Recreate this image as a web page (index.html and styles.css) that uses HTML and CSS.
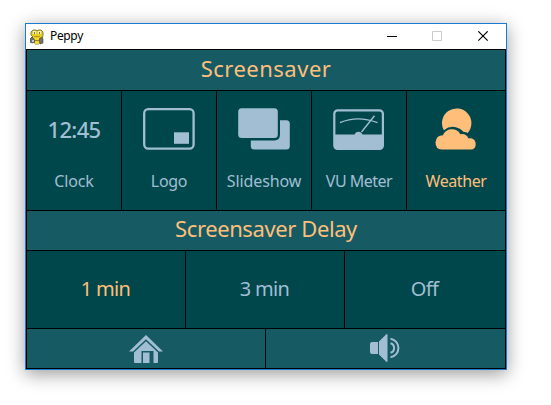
FILE: index.html
```html
<!DOCTYPE html>
<html lang="en">
<head>
<meta charset="utf-8">
<title>Peppy</title>
<link rel="stylesheet" href="styles.css">
</head>
<body>
<div class="window">
  <header class="titlebar">
    <svg class="app-icon" width="14" height="16" viewBox="0 0 14 16">
      <path d="M3 1h3l1 1 1-1h3l2 2v4l-2 3-2 1v4H5v-2H1V9l2-1-2-2V3z" fill="#e8cf22" stroke="#6d642c" stroke-width=".8"/>
      <path d="M0 10l2-2 2 2 1 3-3 1-2-1zM9 10l3-2 1 2v4l-3 1z" fill="#77726b" stroke="#403c35" stroke-width=".6"/>
      <path d="M2 11h2v2H2z" fill="#c9c9c6"/>
      <path d="M3 2h3v3H3zM8 2h3v3H8z" fill="#f2efcd"/>
      <path d="M4 3h1v2H4zM9 3h1v2H9z" fill="#77734a"/>
      <path d="M4 7.500h6" stroke="#b89a10"/>
      <path d="M5 9h4v6H5z" fill="#f0dc20"/>
      <path d="M5 11.500h4" stroke="#9a8420"/>
    </svg>
    <span class="title">Peppy</span>
    <svg class="controls" width="102" height="11" viewBox="0 0 102 11" fill="none">
      <path d="M0 5.500h10" stroke="#000"/>
      <path d="M45.500 .500h9v9h-9z" stroke="#ccc"/>
      <path d="M91.300 .300l9.400 9.400M100.700 .300l-9.400 9.400" stroke="#000" stroke-width="1.100"/>
    </svg>
  </header>
  <main class="screen">
    <h1 class="heading"><span class="t-saver">Screensaver</span></h1>
    <section class="row savers">
      <div class="tile"><div class="icon"><span class="time">12:45</span></div><span class="label l-clock">Clock</span></div>
      <div class="tile"><div class="icon">
        <svg width="52" height="42" viewBox="0 0 52 42"><rect x="1.200" y="1.200" width="49.400" height="39.400" rx="4" fill="none" stroke="currentColor" stroke-width="2.300"/><path d="M31 24.300h15v11.500H31z" fill="currentColor"/></svg>
      </div><span class="label l-logo">Logo</span></div>
      <div class="tile"><div class="icon">
        <svg width="52" height="42" viewBox="0 0 52 42" fill="currentColor"><rect x=".200" y=".300" width="39.600" height="29.700" rx="3.500"/><path d="M42 12.200h6.300q3.500 0 3.500 3.500v22.200q0 3.500-3.500 3.500H16.300q-3.500 0-3.500-3.500v-5.400h23.500q5.700 0 5.700-5.700z"/></svg>
      </div><span class="label l-slide">Slideshow</span></div>
      <div class="tile"><div class="icon">
        <svg width="52" height="42" viewBox="0 0 52 42"><rect x="1.300" y="2.300" width="48.600" height="38.600" rx="3.500" fill="none" stroke="currentColor" stroke-width="2.200"/><path d="M1 26.600h20.500a4.200 4.200 0 0 1 8 0H50V38q0 3.500-3.500 3.500h-42Q1 41.500 1 38z" fill="currentColor"/><path d="M7 14.600q17.500-7.500 37.500 0M28.500 24L41.500 7.800" fill="none" stroke="currentColor" stroke-width="1.400"/></svg>
      </div><span class="label l-vu">VU Meter</span></div>
      <div class="tile active"><div class="icon">
        <svg class="weather" width="42" height="42" viewBox="0 0 42 42" fill="currentColor"><path d="M8.800 22.200A14.700 14.700 0 1 1 32.600 25Q31.300 23.700 28.800 24Q26 21.200 24.300 20.600Q16.300 16.300 8.800 22.200z"/><path d="M6.700 41.500Q.500 41.200.500 34.500Q1 27.300 8 27.200C11 19.500 22.500 19.500 25.300 26.300C29 25.500 32.500 27.500 33.300 30.300C38 29.500 41 32.300 40.700 36.500Q40.300 41.500 36 41.500z"/></svg>
      </div><span class="label l-weather">Weather</span></div>
    </section>
    <h2 class="heading"><span class="t-delay">Screensaver Delay</span></h2>
    <section class="row delays">
      <div class="choice active"><span>1 min</span></div>
      <div class="choice"><span>3 min</span></div>
      <div class="choice"><span>Off</span></div>
    </section>
    <nav class="row nav">
      <div class="button">
        <svg width="34" height="28" viewBox="0 0 34 28" fill="currentColor"><path d="M17 0L34 16.500h-4L17 4.300 4 16.500H0z"/><path d="M17 6.300L29 17.500V27q0 1-1 1h-3.500V16h-12v12H6q-1 0-1-1v-9.500z"/><path d="M14 17.500h6.500V28H14z"/></svg>
      </div>
      <div class="button volume">
        <svg width="30" height="28" viewBox="0 0 30 28"><path d="M2 8h6v12H2q-2 0-2-2v-8q0-2 2-2zM9 7.500L16 .500q1.500-1 1.500.500v26q0 1.500-1.500.500l-7-7z" fill="currentColor"/><path d="M20.500 9.200a5 5 0 0 1 0 9.600M20.500 4.800a9.300 9.300 0 0 1 0 18.400" fill="none" stroke="currentColor" stroke-width="2"/></svg>
      </div>
    </nav>
  </main>
</div>
</body>
</html>
```

FILE: styles.css
```css
* { box-sizing: border-box; }
body {
  margin: 0;
  padding: 23px 0 0 25px;
  height: 405px;
  overflow: hidden;
  background: #fff;
  font-family: "Noto Sans", sans-serif;
}
.window {
  width: 482px;
  height: 347px;
  border: 1px solid #1a7bd0;
  box-shadow: 0 4px 17px rgba(0, 0, 0, .4);
}
.titlebar {
  display: flex;
  align-items: center;
  height: 25px;
  padding: 0 17px 0 4px;
  background: #fff;
}
.title { margin: -1px 0 0 6px; font-size: 12px; line-height: 16px; color: #000; letter-spacing: -.35px; }
.controls { margin-left: auto; }
.screen {
  display: grid;
  grid-template-rows: 40px 119px 39px 77px 39px;
  gap: 1px;
  height: 320px;
  padding: 1px;
  background: #000;
  color: #a1bed3;
}
.row { display: grid; gap: 1px; }
.savers { grid-template-columns: repeat(4, 94px) 98px; }
.delays { grid-template-columns: 158px 158px 160px; }
.nav { grid-template-columns: 238px 239px; }
.heading {
  display: flex;
  align-items: center;
  justify-content: center;
  margin: 0;
  padding-bottom: 5px;
  background: #165b64;
  color: #ffbf7a;
  font-size: 22px;
  font-weight: 400;
  white-space: nowrap;
}
.t-saver { letter-spacing: .5px; }
.t-delay { letter-spacing: -.4px; }
.tile {
  display: flex;
  flex-direction: column;
  align-items: center;
  padding-top: 17px;
  background: #00474b;
}
.active { color: #ffbf7a; }
.icon { display: flex; align-items: center; justify-content: center; height: 42px; }
.icon svg { margin-right: 1px; }
.time { font-size: 22px; font-weight: 500; letter-spacing: -.7px; }
.label { margin-top: 19px; font-size: 16px; line-height: 24px; white-space: nowrap; }
.l-clock, .l-slide { letter-spacing: -.1px; }
.l-logo { letter-spacing: -.3px; }
.l-vu { letter-spacing: -.5px; }
.l-weather { letter-spacing: -.4px; }
.choice {
  display: flex;
  align-items: center;
  justify-content: center;
  padding: 0 1px 3px 0;
  background: #00474b;
  font-size: 20px;
  letter-spacing: -.7px;
}
.button { display: flex; align-items: center; justify-content: center; background: #165b64; }
.volume { padding: 0 2px 2px 0; }
```
